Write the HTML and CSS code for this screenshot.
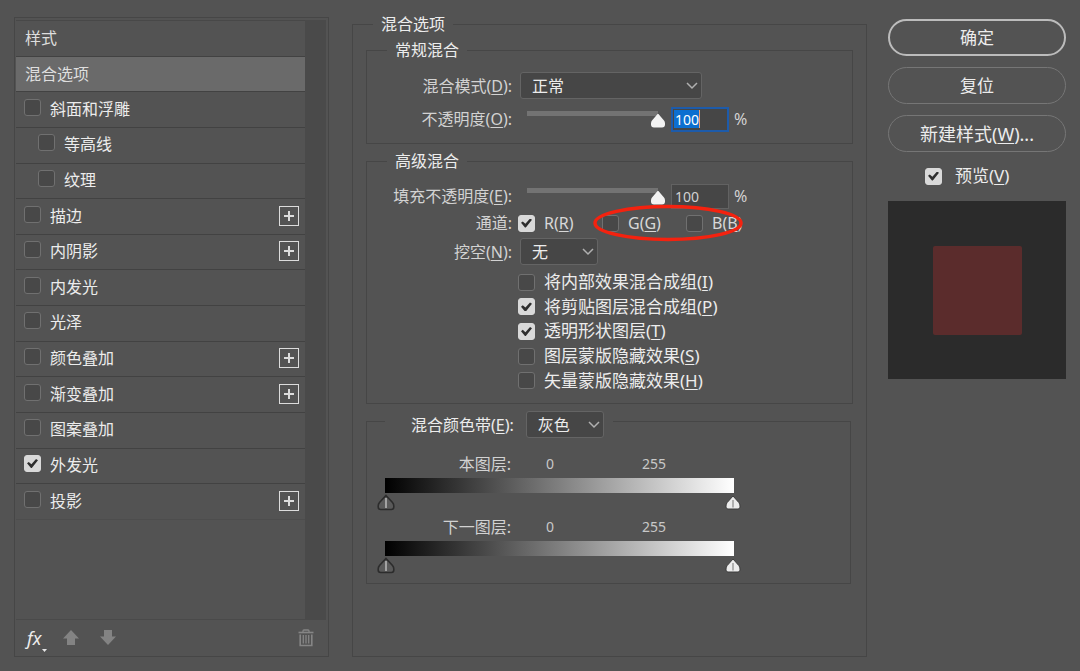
FILE: index.html
```html
<!DOCTYPE html>
<html lang="zh-CN">
<head>
<meta charset="utf-8">
<title>图层样式</title>
<link rel="stylesheet" href="styles.css">
</head>
<body>
<main class="dialog">
  <section class="styles-panel" aria-label="样式">
    <div class="styles-body">
      <ul class="styles-list">
        <li class="style-row heading">样式</li>
        <li class="style-row heading selected">混合选项</li>
        <li class="style-row"><label class="style-label"><input class="check" type="checkbox"><span>斜面和浮雕</span></label></li>
        <li class="style-row nested"><label class="style-label"><input class="check" type="checkbox"><span>等高线</span></label></li>
        <li class="style-row nested"><label class="style-label"><input class="check" type="checkbox"><span>纹理</span></label></li>
        <li class="style-row"><label class="style-label"><input class="check" type="checkbox"><span>描边</span></label><button class="add" type="button" aria-label="添加描边"></button></li>
        <li class="style-row"><label class="style-label"><input class="check" type="checkbox"><span>内阴影</span></label><button class="add" type="button" aria-label="添加内阴影"></button></li>
        <li class="style-row"><label class="style-label"><input class="check" type="checkbox"><span>内发光</span></label></li>
        <li class="style-row"><label class="style-label"><input class="check" type="checkbox"><span>光泽</span></label></li>
        <li class="style-row"><label class="style-label"><input class="check" type="checkbox"><span>颜色叠加</span></label><button class="add" type="button" aria-label="添加颜色叠加"></button></li>
        <li class="style-row"><label class="style-label"><input class="check" type="checkbox"><span>渐变叠加</span></label><button class="add" type="button" aria-label="添加渐变叠加"></button></li>
        <li class="style-row"><label class="style-label"><input class="check" type="checkbox"><span>图案叠加</span></label></li>
        <li class="style-row"><label class="style-label"><input class="check" type="checkbox" checked><span>外发光</span></label></li>
        <li class="style-row"><label class="style-label"><input class="check" type="checkbox"><span>投影</span></label><button class="add" type="button" aria-label="添加投影"></button></li>
      </ul>
      <div class="scroll-strip"></div>
    </div>
    <div class="toolbar">
      <button class="tool fx" type="button">fx<svg class="fx-caret" width="5" height="3" viewBox="0 0 5 3"><path d="M0 0H5L2.500 3Z" fill="#e6e6e6"/></svg></button>
      <button class="tool" type="button" aria-label="上移"><svg width="16" height="16" viewBox="0 0 16 16"><path d="M8 0L16 8.500H12V15H4V8.500H0Z" fill="#838383"/></svg></button>
      <button class="tool" type="button" aria-label="下移"><svg width="16" height="16" viewBox="0 0 16 16"><path d="M4 0H12V6.500H16L8 15L0 6.500H4Z" fill="#838383"/></svg></button>
      <button class="tool trash" type="button" aria-label="删除"><svg width="16" height="18" viewBox="0 0 16 18" fill="none" stroke="#858585"><path d="M5 3V2Q5 1 6 1H10Q11 1 11 2V3" stroke-width="1.300"/><path d="M0.500 3.500H15.500" stroke-width="1.600"/><path d="M2.200 5.500V16.500H13.800V5.500" stroke-width="1.600"/><path d="M5.300 6V14.500M8 6V14.500M10.700 6V14.500" stroke-width="1.300"/></svg></button>
    </div>
  </section>

  <fieldset class="options">
    <legend>混合选项</legend>

    <fieldset class="group general">
      <legend>常规混合</legend>
      <label class="name" for="mode">混合模式(<u>D</u>):</label>
      <div class="dropdown wide"><select id="mode"><option>正常</option></select><svg class="chevron" width="12" height="8" viewBox="0 0 12 8"><path d="M1 1L6 6L11 1"/></svg></div>
      <label class="name" for="opacity">不透明度(<u>O</u>):</label>
      <div class="slider-row"><input class="slider" type="range" value="100" aria-label="不透明度"><input class="number active" id="opacity" type="text" value="100"><span>%</span></div>
    </fieldset>

    <fieldset class="group advanced">
      <legend>高级混合</legend>
      <label class="name" for="fill">填充不透明度(<u>E</u>):</label>
      <div class="slider-row"><input class="slider" type="range" value="100" aria-label="填充不透明度"><input class="number" id="fill" type="text" value="100"><span>%</span></div>
      <span class="name">通道:</span>
      <div class="channels">
        <label class="option"><input class="check" type="checkbox" checked><span>R(<u>R</u>)</span></label>
        <label class="option"><input class="check" type="checkbox"><span>G(<u>G</u>)</span></label>
        <label class="option"><input class="check" type="checkbox"><span>B(<u>B</u>)</span></label>
        <svg class="marker" width="152" height="38" viewBox="0 0 152 38"><ellipse cx="76" cy="19" rx="73" ry="16.500" fill="none" stroke="#f4220f" stroke-width="3.500"/></svg>
      </div>
      <label class="name" for="knockout">挖空(<u>N</u>):</label>
      <div class="dropdown"><select id="knockout"><option>无</option></select><svg class="chevron" width="12" height="8" viewBox="0 0 12 8"><path d="M1 1L6 6L11 1"/></svg></div>
      <div class="checks">
        <label class="option"><input class="check" type="checkbox"><span>将内部效果混合成组(<u>I</u>)</span></label>
        <label class="option"><input class="check" type="checkbox" checked><span>将剪贴图层混合成组(<u>P</u>)</span></label>
        <label class="option"><input class="check" type="checkbox" checked><span>透明形状图层(<u>T</u>)</span></label>
        <label class="option"><input class="check" type="checkbox"><span>图层蒙版隐藏效果(<u>S</u>)</span></label>
        <label class="option"><input class="check" type="checkbox"><span>矢量蒙版隐藏效果(<u>H</u>)</span></label>
      </div>
    </fieldset>

    <fieldset class="group blend-if">
      <legend><label for="blendif">混合颜色带(<u>E</u>):</label><span class="dropdown"><select id="blendif"><option>灰色</option></select><svg class="chevron" width="12" height="8" viewBox="0 0 12 8"><path d="M1 1L6 6L11 1"/></svg></span></legend>
      <div class="band">
        <div class="band-head"><span class="name">本图层:</span><span class="value">0</span><span class="value">255</span></div>
        <div class="ramp"></div>
        <div class="stops">
          <svg width="18" height="17" viewBox="0 0 18 17"><path d="M9 1.500L15.500 8.500Q16.800 10 16.800 12V13Q16.800 15.500 14.300 15.500H3.700Q1.200 15.500 1.200 13V12Q1.200 10 2.500 8.500Z" fill="#5a5a5a" stroke="#2c2c2c" stroke-width="1.600"/><path d="M9 4V14" stroke="#a2a2a2" stroke-width="2"/></svg>
          <svg width="18" height="17" viewBox="0 0 18 17"><path d="M9 2L14.800 8.500Q16 10 16 12V13Q16 15 14 15H4Q2 15 2 13V12Q2 10 3.200 8.500Z" fill="#ececec" stroke="#3d3d3d" stroke-width="1"/><path d="M9 6V13.500" stroke="#b0b0b0" stroke-width="2"/></svg>
        </div>
      </div>
      <div class="band">
        <div class="band-head"><span class="name">下一图层:</span><span class="value">0</span><span class="value">255</span></div>
        <div class="ramp"></div>
        <div class="stops">
          <svg width="18" height="17" viewBox="0 0 18 17"><path d="M9 1.500L15.500 8.500Q16.800 10 16.800 12V13Q16.800 15.500 14.300 15.500H3.700Q1.200 15.500 1.200 13V12Q1.200 10 2.500 8.500Z" fill="#5a5a5a" stroke="#2c2c2c" stroke-width="1.600"/><path d="M9 4V14" stroke="#a2a2a2" stroke-width="2"/></svg>
          <svg width="18" height="17" viewBox="0 0 18 17"><path d="M9 2L14.800 8.500Q16 10 16 12V13Q16 15 14 15H4Q2 15 2 13V12Q2 10 3.200 8.500Z" fill="#ececec" stroke="#3d3d3d" stroke-width="1"/><path d="M9 6V13.500" stroke="#b0b0b0" stroke-width="2"/></svg>
        </div>
      </div>
    </fieldset>
  </fieldset>

  <aside class="actions">
    <button class="pill primary" type="button">确定</button>
    <button class="pill" type="button">复位</button>
    <button class="pill large" type="button">新建样式(<u>W</u>)...</button>
    <label class="option preview-toggle"><input class="check" type="checkbox" checked><span>预览(<u>V</u>)</span></label>
    <div class="preview"><div class="swatch"></div></div>
  </aside>
</main>
</body>
</html>
```

FILE: styles.css
```css
* {
  box-sizing: border-box;
}

body {
  margin: 0;
  background: #535353;
  color: #ececec;
  font: 16px/20px "Noto Sans", "Noto Sans CJK SC", sans-serif;
}

button,
select,
input {
  font: inherit;
  color: inherit;
  margin: 0;
}

u {
  text-decoration-thickness: 1px;
  text-underline-offset: 2px;
}

.dialog {
  display: grid;
  grid-template-columns: 315px minmax(0, 1fr) 178px;
  column-gap: 22px;
  min-height: 100vh;
  padding: 14px;
}

/* Style list */

.styles-panel {
  display: flex;
  flex-direction: column;
  margin-top: 3px;
  border: 1px solid #464646;
}

.styles-body {
  display: flex;
  flex: 1;
  margin: 2px 2px 0 1px;
  border-bottom: 1px solid #4a4a4a;
}

.styles-list {
  flex: 1;
  display: grid;
  grid-auto-rows: 1fr;
  align-self: start;
  min-height: 500px;
  margin: 0;
  padding: 0;
  list-style: none;
  border-top: 1px solid #484848;
}

.style-row {
  display: flex;
  align-items: center;
  justify-content: space-between;
  padding: 0 6px 2px 8px;
  border-bottom: 1px solid #424242;
}

.style-row:last-child {
  border-bottom-color: #4d4d4d;
}

.heading {
  padding: 0 9px;
  color: #dedede;
}

.selected {
  background: #6a6a6a;
}

.nested {
  padding-left: 22px;
}

.style-label {
  display: flex;
  gap: 9px;
}

.scroll-strip {
  width: 21px;
  background: #4a4a4a;
}

.check {
  appearance: none;
  flex: none;
  width: 17px;
  height: 17px;
  border: 1px solid #707070;
  border-radius: 3px;
  background: #484848;
}

.check:checked {
  border-color: #d9d9d9;
  background: #d9d9d9;
}

.check:checked::before {
  content: "";
  display: block;
  width: 11px;
  height: 9px;
  margin: 3px 2px;
  background: #2e2e2e;
  clip-path: polygon(0 48%, 16% 32%, 40% 58%, 82% 0, 100% 14%, 44% 100%, 36% 100%);
}

.add {
  width: 20px;
  height: 20px;
  padding: 0;
  border: 1px solid #dcdcdc;
  background:
    linear-gradient(#dcdcdc, #dcdcdc) center / 10px 2px no-repeat,
    linear-gradient(#dcdcdc, #dcdcdc) center / 2px 10px no-repeat;
}

.toolbar {
  display: flex;
  align-items: center;
  gap: 21px;
  height: 36px;
  padding: 0 14px 0 12px;
}

.tool {
  display: flex;
  padding: 0;
  border: 0;
  background: none;
}

.fx {
  position: relative;
  margin-right: 1px;
  font-size: 18px;
  font-style: italic;
}

.fx-caret {
  position: absolute;
  right: -6px;
  bottom: -4px;
}

.trash {
  margin-left: auto;
}

/* Option groups */

fieldset {
  min-width: 0;
  margin: 0;
  padding: 0;
  border: 1px solid #464646;
}

legend {
  margin-left: 20px;
  padding: 0 8px;
}

.options {
  margin: 0 -1px 0 1px;
  padding: 0 13px;
}

.options > legend {
  margin-left: 7px;
}

.group {
  display: grid;
  grid-template-columns: 145px minmax(0, 1fr);
  column-gap: 8px;
  align-items: center;
}

.general {
  grid-template-rows: 27px 24px;
  row-gap: 8px;
  margin-top: 6px;
  padding: 12px 0;
}

.advanced {
  grid-template-rows: 24px 20px 27px auto;
  row-gap: 5px;
  margin-top: 7px;
  padding: 13px 0 10px;
}

.name {
  text-align: right;
  color: #d2d2d2;
}

.dropdown {
  position: relative;
  display: block;
  width: 78px;
  height: 27px;
}

.wide {
  width: 182px;
}

.dropdown select {
  appearance: none;
  display: block;
  width: 100%;
  height: 100%;
  padding: 0 24px 0 11px;
  border: 1px solid #646464;
  border-radius: 3px;
  background: #464646;
}

.chevron {
  position: absolute;
  right: 4px;
  top: 10px;
  fill: none;
  stroke: #b0b0b0;
  stroke-width: 1.5;
  pointer-events: none;
}

.slider-row {
  display: flex;
  align-items: center;
  color: #d2d2d2;
}

.slider {
  appearance: none;
  width: 145px;
  height: 17px;
  background: none;
}

.slider::-webkit-slider-runnable-track {
  height: 17px;
  background: linear-gradient(#737373, #737373) 7px 0 / calc(100% - 14px) 5px no-repeat;
}

.slider::-webkit-slider-thumb {
  appearance: none;
  width: 14px;
  height: 14px;
  margin-top: 3px;
  background: #f2f2f2;
  clip-path: path("M7 0L13 7Q14 8 14 10V11Q14 14 11 14H3Q0 14 0 11V10Q0 8 1 7Z");
}

.number {
  width: 58px;
  height: 25px;
  margin: 0 5px 0 6px;
  padding: 0 3px;
  border: 1px solid #626262;
  background: #464646;
  font-size: 14px;
}

.active {
  padding: 0 2px;
  border: 2px solid #1d5baa;
  background:
    linear-gradient(#f0a070, #f0a070) 26px center / 1px 18px no-repeat,
    linear-gradient(#0c6fd0, #0c6fd0) 1px center / 25px 18px no-repeat,
    #464646;
  color: #fff;
}

.option {
  display: flex;
  align-items: center;
  gap: 9px;
}

.channels {
  position: relative;
  display: grid;
  grid-template-columns: repeat(3, 84px);
  margin-left: -2px;
  color: #d8d8d8;
}

.marker {
  position: absolute;
  left: 74px;
  top: -9px;
  pointer-events: none;
}

.checks {
  grid-column: 2;
  display: grid;
  grid-auto-rows: 1fr;
  min-height: 123px;
  margin-left: -2px;
  font-size: 17px;
}

.blend-if {
  display: block;
  margin: 1px 2px 0 0;
  padding: 16px 0 9px;
}

.blend-if legend {
  display: flex;
  align-items: center;
  gap: 12px;
  margin-left: 18px;
  padding: 6px 9px 0 26px;
}

.band {
  padding: 0 116px 0 18px;
}

.band + .band {
  margin-top: 6px;
}

.band-head {
  display: grid;
  grid-template-columns: 126px 78px 60px;
  column-gap: 35px;
  margin-bottom: 4px;
}

.value {
  font-size: 14px;
  color: #c8c8c8;
}

.band-head .value:last-child {
  margin-left: -17px;
}

.ramp {
  height: 15px;
  background: linear-gradient(to right, #000, #fff);
}

.stops {
  display: flex;
  justify-content: space-between;
  margin: 1px -8px 0;
}

/* Actions */

.actions {
  display: flex;
  flex-direction: column;
  gap: 11px;
  padding-top: 5px;
}

.pill {
  height: 37px;
  padding: 0;
  border: 1px solid #767676;
  border-radius: 19px;
  background: none;
  font-size: 17px;
}

.primary {
  border: 2px solid #bcbcbc;
}

.large {
  font-size: 18px;
}

.preview-toggle {
  gap: 13px;
  margin: 3px 0 4px;
  padding-left: 37px;
  font-size: 17px;
}

.preview {
  display: grid;
  place-items: center;
  aspect-ratio: 1;
  background: #2b2b2b;
}

.swatch {
  width: 50%;
  height: 50%;
  border-radius: 2px;
  background: #5b2c2c;
}
```
